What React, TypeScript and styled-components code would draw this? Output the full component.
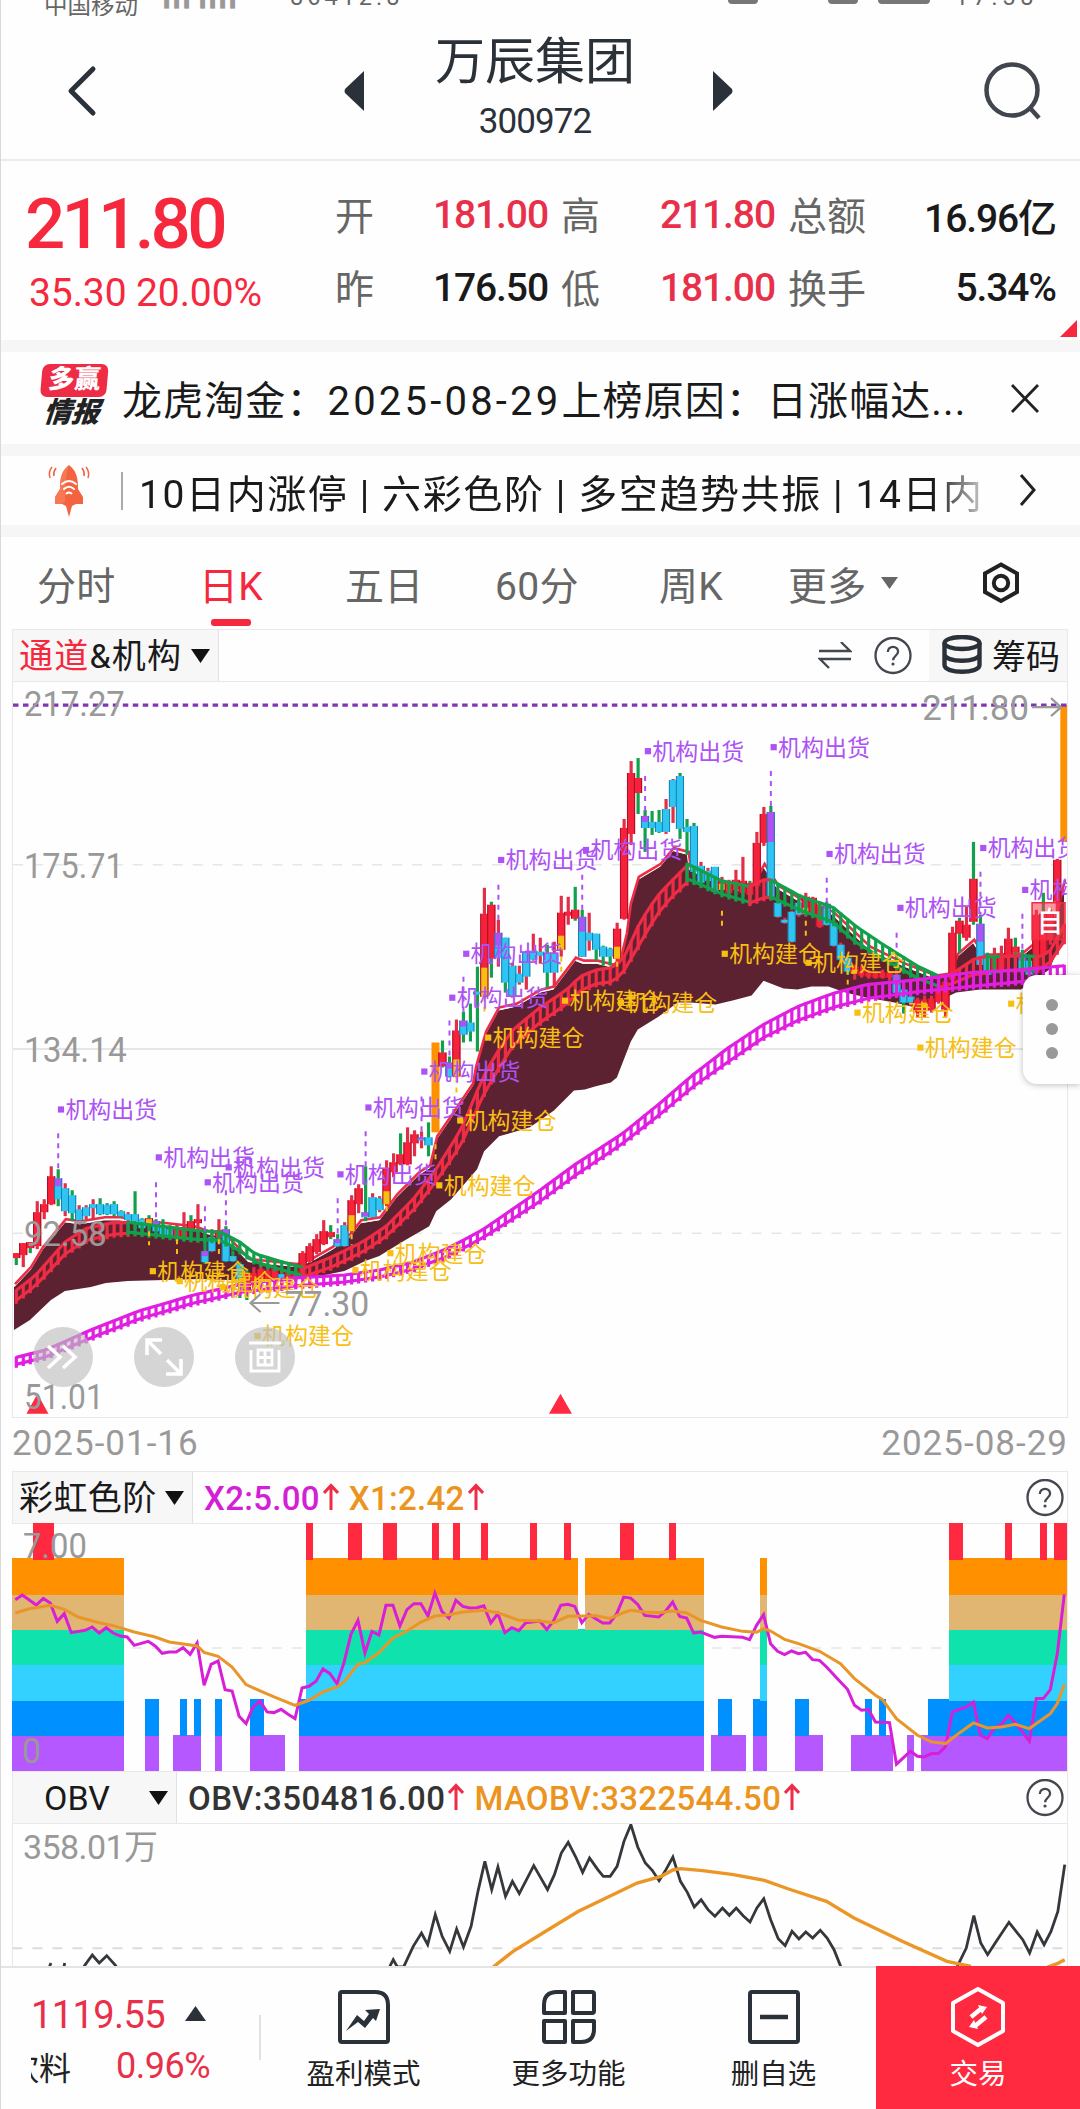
import React from "react";
import styled, { createGlobalStyle } from "styled-components";

const STEP = 7;
const RED = "#f5283e";
const GREEN = "#12a04c";
const ORANGE = "#ff9100";
const PURPLE = "#ad52f5";
const YELLOW = "#f7bf12";
const INK = "#2b3138";

const cx = (i: number) => 15.3 + STEP * i;

type Pt = [number, number];
const toPoints = (pts: Pt[]) => pts.map((p) => p.join(",")).join(" ");

// index, body kind, wick colour, high, body top, body split, body bottom, low
// kind: r = red, c = cyan, y = red over yellow, p = purple over cyan, o = orange
type Candle = [number, string, string, number, number, number, number, number];
const candles: Candle[] = [
    [0, "r", "g", 1254, 1254, 0, 1259, 1266],
    [1, "r", "r", 1244, 1244, 0, 1256, 1268],
    [2, "r", "g", 1243, 1243, 0, 1249, 1254],
    [3, "r", "r", 1202, 1213, 0, 1247, 1250],
    [4, "r", "r", 1200, 1205, 0, 1213, 1220],
    [5, "r", "r", 1167, 1177, 0, 1205, 1206],
    [6, "p", "g", 1170, 1179, 1187, 1200, 1207],
    [7, "c", "r", 1184, 1189, 0, 1212, 1217],
    [8, "c", "g", 1191, 1196, 0, 1214, 1222],
    [9, "c", "r", 1206, 1210, 0, 1221, 1223],
    [10, "c", "r", 1206, 1208, 0, 1217, 1220],
    [11, "c", "r", 1200, 1205, 0, 1209, 1221],
    [12, "c", "g", 1199, 1205, 0, 1215, 1216],
    [13, "c", "g", 1204, 1206, 0, 1215, 1216],
    [14, "c", "g", 1202, 1205, 0, 1215, 1217],
    [15, "c", "g", 1211, 1212, 0, 1217, 1218],
    [16, "c", "r", 1213, 1215, 0, 1221, 1224],
    [17, "c", "g", 1192, 1215, 0, 1222, 1230],
    [18, "c", "g", 1219, 1220, 0, 1229, 1234],
    [19, "y", "g", 1216, 1219, 1220, 1225, 1232],
    [20, "p", "g", 1220, 1222, 1227, 1232, 1235],
    [21, "c", "g", 1220, 1228, 0, 1237, 1239],
    [22, "c", "g", 1226, 1230, 0, 1238, 1239],
    [23, "r", "r", 1225, 1229, 0, 1239, 1242],
    [24, "r", "r", 1213, 1228, 0, 1238, 1242],
    [25, "r", "g", 1216, 1222, 0, 1230, 1241],
    [26, "r", "r", 1205, 1220, 0, 1224, 1240],
    [27, "p", "g", 1230, 1252, 1257, 1263, 1265],
    [28, "c", "r", 1230, 1238, 0, 1252, 1253],
    [29, "r", "r", 1220, 1231, 0, 1239, 1243],
    [30, "p", "g", 1227, 1230, 1236, 1262, 1263],
    [31, "c", "g", 1252, 1257, 0, 1262, 1263],
    [32, "c", "g", 1263, 1265, 0, 1288, 1299],
    [33, "r", "g", 1271, 1274, 0, 1293, 1301],
    [34, "r", "r", 1268, 1274, 0, 1286, 1290],
    [35, "r", "r", 1266, 1270, 0, 1282, 1288],
    [36, "r", "r", 1268, 1272, 0, 1282, 1286],
    [37, "r", "r", 1268, 1270, 0, 1281, 1284],
    [38, "c", "r", 1270, 1275, 0, 1281, 1286],
    [39, "r", "r", 1270, 1273, 0, 1282, 1285],
    [40, "r", "g", 1269, 1272, 0, 1278, 1282],
    [41, "r", "r", 1252, 1254, 0, 1277, 1280],
    [42, "r", "r", 1244, 1247, 0, 1262, 1264],
    [43, "r", "r", 1235, 1240, 0, 1253, 1255],
    [44, "r", "r", 1221, 1232, 0, 1245, 1246],
    [45, "r", "g", 1226, 1233, 0, 1238, 1240],
    [46, "p", "g", 1235, 1240, 1244, 1247, 1248],
    [47, "c", "r", 1223, 1226, 0, 1247, 1248],
    [48, "y", "r", 1196, 1201, 1216, 1232, 1235],
    [49, "r", "r", 1185, 1189, 0, 1205, 1214],
    [50, "p", "g", 1167, 1213, 1217, 1218, 1222],
    [51, "c", "r", 1194, 1198, 0, 1218, 1219],
    [52, "c", "r", 1197, 1199, 0, 1211, 1213],
    [53, "y", "r", 1161, 1169, 1192, 1205, 1207],
    [54, "r", "r", 1154, 1163, 0, 1173, 1178],
    [55, "r", "g", 1134, 1155, 0, 1165, 1166],
    [56, "r", "r", 1128, 1143, 0, 1165, 1166],
    [57, "r", "r", 1131, 1135, 0, 1144, 1157],
    [58, "p", "r", 1132, 1138, 1140, 1141, 1149],
    [59, "c", "g", 1123, 1138, 0, 1146, 1157],
    [60, "o", "r", 1043, 1043, 0, 1133, 1133],
    [61, "r", "g", 1041, 1053, 0, 1067, 1068],
    [62, "p", "g", 1057, 1063, 1069, 1077, 1078],
    [63, "y", "r", 1020, 1031, 1060, 1077, 1078],
    [64, "p", "g", 1012, 1021, 1027, 1035, 1043],
    [65, "c", "g", 1004, 1023, 0, 1032, 1042],
    [66, "c", "g", 967, 992, 0, 995, 1052],
    [67, "y", "r", 888, 914, 968, 997, 998],
    [68, "r", "g", 902, 905, 0, 959, 978],
    [69, "p", "r", 920, 933, 946, 958, 967],
    [70, "c", "g", 938, 938, 0, 983, 993],
    [71, "c", "r", 963, 966, 0, 997, 998],
    [72, "c", "r", 966, 974, 0, 983, 985],
    [73, "c", "r", 951, 953, 0, 977, 990],
    [74, "c", "r", 934, 951, 0, 960, 961],
    [75, "c", "r", 938, 952, 0, 956, 964],
    [76, "c", "g", 945, 953, 0, 973, 988],
    [77, "c", "r", 942, 953, 0, 973, 987],
    [78, "y", "r", 896, 913, 936, 950, 957],
    [79, "r", "r", 897, 912, 0, 916, 925],
    [80, "r", "g", 887, 910, 0, 919, 921],
    [81, "p", "g", 910, 917, 932, 957, 957],
    [82, "c", "r", 913, 933, 0, 941, 951],
    [83, "c", "g", 934, 934, 0, 950, 961],
    [84, "c", "g", 946, 947, 0, 957, 966],
    [85, "c", "g", 948, 949, 0, 957, 966],
    [86, "y", "r", 923, 929, 947, 959, 964],
    [87, "r", "r", 819, 828, 0, 919, 920],
    [88, "r", "r", 761, 773, 0, 834, 845],
    [89, "r", "g", 758, 778, 0, 793, 814],
    [90, "p", "g", 810, 816, 822, 828, 852],
    [91, "c", "g", 811, 822, 0, 828, 835],
    [92, "c", "g", 810, 822, 0, 832, 833],
    [93, "c", "r", 799, 809, 0, 832, 834],
    [94, "c", "r", 779, 780, 0, 807, 823],
    [95, "c", "g", 773, 776, 0, 829, 839],
    [96, "c", "g", 819, 827, 0, 832, 855],
    [97, "c", "g", 823, 826, 0, 872, 876],
    [98, "c", "r", 862, 866, 0, 883, 886],
    [99, "c", "r", 868, 871, 0, 881, 883],
    [100, "c", "g", 867, 867, 0, 892, 893],
    [101, "y", "r", 877, 881, 884, 890, 892],
    [102, "r", "r", 880, 884, 0, 893, 896],
    [103, "r", "r", 870, 880, 0, 890, 895],
    [104, "r", "r", 857, 881, 0, 893, 897],
    [105, "r", "g", 881, 883, 0, 895, 900],
    [106, "r", "r", 832, 843, 0, 886, 888],
    [107, "r", "r", 807, 814, 0, 843, 846],
    [108, "p", "g", 806, 812, 842, 897, 897],
    [109, "c", "r", 890, 903, 0, 917, 918],
    [110, "c", "r", 918, 920, 0, 923, 924],
    [111, "c", "r", 911, 912, 0, 942, 943],
    [112, "c", "r", 900, 903, 0, 915, 917],
    [113, "y", "r", 893, 897, 908, 914, 917],
    [114, "r", "r", 897, 898, 0, 915, 916],
    [115, "r", "r", 903, 907, 0, 927, 928],
    [116, "p", "g", 902, 904, 909, 925, 926],
    [117, "c", "r", 920, 923, 0, 946, 947],
    [118, "c", "r", 943, 945, 0, 960, 961],
    [119, "c", "g", 956, 958, 0, 972, 975],
    [120, "y", "r", 965, 967, 970, 974, 980],
    [121, "r", "r", 966, 971, 0, 976, 978],
    [122, "r", "r", 970, 973, 0, 977, 979],
    [123, "r", "r", 972, 973, 0, 978, 979],
    [124, "r", "r", 970, 973, 0, 978, 979],
    [125, "r", "r", 972, 973, 0, 978, 981],
    [126, "p", "r", 970, 975, 985, 993, 995],
    [127, "c", "g", 985, 990, 0, 1003, 1014],
    [128, "c", "r", 992, 997, 0, 1003, 1006],
    [129, "r", "r", 998, 1000, 0, 1013, 1018],
    [130, "y", "r", 996, 1000, 1003, 1008, 1018],
    [131, "r", "r", 996, 999, 0, 1011, 1013],
    [132, "r", "r", 985, 988, 0, 1002, 1004],
    [133, "r", "r", 978, 982, 0, 1010, 1018],
    [134, "r", "r", 927, 933, 0, 980, 981],
    [135, "r", "g", 918, 921, 0, 934, 953],
    [136, "r", "r", 907, 925, 0, 938, 941],
    [137, "r", "g", 842, 879, 0, 922, 925],
    [138, "p", "g", 915, 924, 942, 965, 968],
    [139, "c", "g", 953, 957, 0, 975, 981],
    [140, "r", "r", 948, 958, 0, 973, 978],
    [141, "r", "r", 946, 955, 0, 970, 974],
    [142, "r", "r", 928, 939, 0, 955, 961],
    [143, "r", "g", 938, 947, 0, 953, 972],
    [144, "p", "g", 950, 954, 961, 970, 978],
    [145, "c", "g", 955, 961, 0, 975, 979],
    [146, "r", "r", 910, 915, 0, 973, 977],
    [147, "r", "g", 893, 914, 0, 955, 960],
    [148, "r", "r", 908, 914, 0, 940, 945],
    [149, "r", "r", 859, 860, 0, 902, 925],
    [150, "o", "r", 705, 705, 0, 842, 842],
];

const cloudTop: Pt[] = [
    [13, 1288], [29, 1271], [41, 1251], [64, 1223], [79, 1225], [103, 1221], [119, 1221], [138, 1224],
    [193, 1230], [207, 1235], [224, 1238], [248, 1263], [296, 1268], [310, 1263], [331, 1251], [348, 1239],
    [360, 1224], [379, 1221], [396, 1198], [418, 1176], [429, 1169], [436, 1140], [451, 1118], [472, 1087],
    [475, 1070], [485, 1035], [498, 1011], [516, 1007], [540, 993], [553, 990], [575, 961], [583, 964],
    [597, 964], [613, 968], [620, 962], [626, 937], [630, 907], [638, 880], [660, 867], [673, 851], [688, 855],
    [690, 870], [722, 887], [750, 893], [764, 867], [778, 889], [802, 903], [833, 915], [870, 950],
    [905, 967], [936, 979], [950, 977], [958, 957], [974, 943], [984, 958], [1022, 957], [1039, 943],
    [1056, 920], [1065, 883],
];

const cloudBottom: Pt[] = [
    [13, 1331], [29, 1321], [50, 1301], [64, 1292], [90, 1288], [105, 1284], [127, 1282], [200, 1280],
    [260, 1282], [310, 1279], [344, 1272], [365, 1262], [379, 1257], [403, 1242], [429, 1227], [436, 1212],
    [451, 1200], [477, 1170], [484, 1152], [499, 1137], [530, 1128], [554, 1111], [574, 1091], [585, 1090],
    [595, 1087], [611, 1083], [617, 1078], [624, 1060], [631, 1042], [638, 1030], [659, 1017], [678, 1003],
    [691, 1003], [716, 1005], [733, 1001], [752, 996], [764, 981], [784, 989], [798, 990], [812, 987],
    [829, 987], [846, 993], [867, 998], [895, 1003], [912, 1007], [936, 1003], [957, 993], [981, 990],
    [1022, 990], [1050, 970], [1065, 937],
];

// x, upper edge, lower edge
type Band = [number, number, number];
const ribbons: { color: string; from: number; to: number; pts: Band[] }[] = [
    {
        color: "#ee2c45", from: 0, to: 16,
        pts: [[13, 1293, 1303], [34, 1277, 1287], [65, 1242, 1254], [86, 1229, 1241], [114, 1223, 1235], [131, 1224, 1234]],
    },
    {
        color: "#12a04c", from: 16, to: 41,
        pts: [[127, 1223, 1233], [193, 1231, 1240], [220, 1233, 1241], [238, 1242, 1251], [255, 1255, 1263], [300, 1268, 1276]],
    },
    {
        color: "#ee2c45", from: 41, to: 96,
        pts: [
            [299, 1271, 1279], [331, 1258, 1268], [362, 1243, 1253], [386, 1227, 1237], [413, 1200, 1211],
            [436, 1170, 1182], [461, 1130, 1145], [482, 1080, 1098], [495, 1056, 1075], [513, 1030, 1046],
            [540, 1008, 1023], [567, 990, 1004], [580, 977, 991], [597, 970, 984], [613, 968, 982], [623, 960, 973],
            [640, 923, 944], [657, 897, 915], [673, 880, 896], [690, 863, 880],
        ],
    },
    { color: "#12a04c", from: 96, to: 105, pts: [[688, 864, 879], [722, 881, 894], [752, 887, 903]] },
    { color: "#ee2c45", from: 105, to: 108, pts: [[750, 887, 903], [764, 880, 898], [774, 880, 897]] },
    {
        color: "#12a04c", from: 108, to: 132,
        pts: [[771, 880, 897], [802, 897, 911], [833, 907, 922], [857, 927, 943], [884, 945, 959], [919, 967, 979], [943, 978, 988]],
    },
    { color: "#ee2c45", from: 132, to: 139, pts: [[939, 978, 988], [953, 974, 984], [974, 960, 975], [984, 957, 974], [990, 957, 973]] },
    { color: "#12a04c", from: 139, to: 141, pts: [[984, 957, 972], [1004, 957, 972]] },
    { color: "#ee2c45", from: 141, to: 144, pts: [[1000, 957, 971], [1025, 956, 971]] },
    { color: "#12a04c", from: 144, to: 146, pts: [[1022, 956, 971], [1038, 957, 971]] },
    { color: "#ee2c45", from: 146, to: 150, pts: [[1036, 958, 971], [1050, 953, 964], [1066, 924, 940]] },
    {
        color: "#e01fe0", from: 0, to: 150,
        pts: [
            [13, 1359, 1366], [45, 1351, 1358], [90, 1331, 1339], [138, 1312, 1320], [193, 1296, 1304],
            [241, 1285, 1293], [293, 1279, 1287], [344, 1276, 1283], [379, 1271, 1278], [413, 1263, 1270],
            [448, 1249, 1257], [482, 1231, 1239], [517, 1207, 1217], [540, 1191, 1202], [574, 1166, 1177],
            [623, 1134, 1144], [660, 1104, 1115], [695, 1074, 1086], [729, 1048, 1062], [764, 1025, 1038],
            [798, 1007, 1021], [833, 994, 1008], [867, 985, 999], [919, 980, 992], [970, 973, 987],
            [1022, 970, 982], [1066, 966, 976],
        ],
    },
];

const bandAt = (pts: Band[], x: number): [number, number] => {
    const k = pts.findIndex((p) => p[0] >= x);
    if (k === -1) return [pts[pts.length - 1][1], pts[pts.length - 1][2]];
    if (k === 0) return [pts[0][1], pts[0][2]];
    const a = pts[k - 1];
    const b = pts[k];
    const t = (x - a[0]) / (b[0] - a[0]);
    return [a[1] + (b[1] - a[1]) * t, a[2] + (b[2] - a[2]) * t];
};

const sellMarks: Pt[] = [
    [645, 751], [771, 747], [827, 854], [898, 908], [981, 848], [1023, 890], [583, 850], [498, 860],
    [463, 954], [449, 998], [421, 1072], [57, 1110], [155, 1158], [225, 1168], [204, 1183], [337, 1175], [365, 1108],
];
const buyMarks: Pt[] = [
    [722, 954], [806, 963], [855, 1013], [918, 1048], [1009, 1004], [562, 1001], [618, 1003], [485, 1038],
    [457, 1121], [436, 1186], [387, 1254], [352, 1271], [149, 1272], [176, 1282], [219, 1288], [254, 1337],
];
// index, from, to
const sellStems = [
    [6, 1134, 1170], [20, 1183, 1225], [27, 1207, 1232], [30, 1191, 1227], [46, 1199, 1240], [50, 1132, 1167],
    [58, 1097, 1138], [62, 1021, 1057], [64, 977, 1012], [69, 885, 920], [81, 875, 910], [90, 776, 812],
    [108, 771, 806], [116, 878, 905], [126, 933, 950], [138, 872, 915], [144, 914, 950],
];
const buyStems = [
    [19, 1232, 1246], [23, 1240, 1256], [29, 1240, 1258], [48, 1235, 1246], [53, 1207, 1216], [60, 1145, 1162],
    [63, 1078, 1096], [67, 997, 1012], [78, 957, 976], [86, 962, 972], [101, 911, 927], [113, 921, 937], [119, 970, 986],
];

const KChart = () => (
    <KSvg viewBox="12 682 1056 736">
        <g stroke="#e6e6e6" strokeWidth="1.5">
            <path d="M12 865H1068M12 1234H1068" strokeDasharray="10 10" />
            <path d="M12 1049.5H1068" strokeWidth="1.5" stroke="#dedede" />
        </g>
        <polygon points={toPoints([...cloudTop, ...[...cloudBottom].reverse()])} fill="#5d2231" />
        <polyline points={toPoints(cloudTop)} fill="none" stroke="#fff" strokeWidth="2" transform="translate(0 -1)" />
        <polyline points={toPoints(cloudTop)} fill="none" stroke="#ee2c45" strokeWidth="2.6" transform="translate(1 -3)" />
        {candles.map(([i, kind, wick, high, top, split, bottom, low]) => {
            const x = cx(i);
            if (kind === "o") return <rect key={i} x={x - 4} y={top} width="8" height={bottom - top} fill={ORANGE} />;
            const upper = kind === "c" ? "#2fc4f2" : kind === "p" ? PURPLE : "#f6213b";
            const lower = kind === "y" ? YELLOW : "#2fc4f2";
            const edge = kind === "c" || kind === "p" ? "#1580ad" : "#a80f26";
            return (
                <g key={i}>
                    <path d={`M${x} ${high}V${low}`} stroke={wick === "g" ? GREEN : "#e03048"} strokeWidth="3.2" />
                    <rect x={x - 4} y={top} width="8" height={bottom - top} fill={upper} />
                    {split > 0 && <rect x={x - 4} y={split} width="8" height={bottom - split} fill={lower} />}
                    <path d={`M${x + 3.5} ${top}V${bottom}M${x - 3.7} ${top}V${bottom}`} stroke={edge} strokeWidth="1" />
                </g>
            );
        })}
        {ribbons.map((r, k) => {
            const xs: number[] = [];
            for (let i = r.from; i <= r.to; i++) xs.push(cx(i));
            const upper = xs.map((x): Pt => [x, bandAt(r.pts, x)[0]]);
            const lower = xs.map((x): Pt => [x, bandAt(r.pts, x)[1]]);
            return (
                <g key={k} stroke={r.color} strokeWidth="3.2" fill="none">
                    <polyline points={toPoints(upper)} />
                    <polyline points={toPoints(lower)} />
                    {xs.map((x, n) => (
                        <path key={n} d={`M${x} ${upper[n][1] - 1}V${lower[n][1] + 3.5}`} strokeWidth="3.2" />
                    ))}
                </g>
            );
        })}
        <g strokeWidth="2" strokeDasharray="5 5">
            {sellStems.map(([i, a, b]) => (
                <path key={i} d={`M${cx(i)} ${a}V${b}`} stroke={PURPLE} />
            ))}
            {buyStems.map(([i, a, b]) => (
                <path key={i} d={`M${cx(i)} ${a}V${b}`} stroke={YELLOW} />
            ))}
        </g>
        <path d="M1033 903H1066V940H1033Z" fill="rgba(245,60,80,.55)" stroke={RED} strokeWidth="1.5" />
        <text x="1038" y="932" fontSize="28" fontWeight="500" fill="#fff" textLength="26" lengthAdjust="spacingAndGlyphs">自</text>
        {sellMarks.map(([x, y], k) => (
            <Mark key={k} x={x} y={y} color={PURPLE} text="机构出货" />
        ))}
        {buyMarks.map(([x, y], k) => (
            <Mark key={k} x={x} y={y} color={YELLOW} text="机构建仓" />
        ))}
        <path d="M12 705H1068" stroke="#8034b8" strokeWidth="3.4" strokeDasharray="5.5 4.5" />
        <g fill="#999" fontSize="35">
            <text x="23" y="716" textLength="101" lengthAdjust="spacingAndGlyphs">217.27</text>
            <text x="23" y="878" textLength="100" lengthAdjust="spacingAndGlyphs">175.71</text>
            <text x="23" y="1063" textLength="103" lengthAdjust="spacingAndGlyphs">134.14</text>
            <text x="23" y="1247" textLength="83" lengthAdjust="spacingAndGlyphs">92.58</text>
            <text x="923" y="720" textLength="107" lengthAdjust="spacingAndGlyphs">211.80</text>
            <text x="284" y="1317" textLength="85" lengthAdjust="spacingAndGlyphs">77.30</text>
        </g>
        <path d="M1033 707H1061M1052 698L1062 707L1052 716" fill="none" stroke="#999" strokeWidth="2.2" />
        <path d="M279 1304H250M260 1295L250 1304L260 1313" fill="none" stroke="#999" strokeWidth="2.2" />
        <path d="M36.5 1395L47.5 1415H25.5ZM560.5 1395L572 1415H549Z" fill="#ff2a40" />
        <text x="23" y="1410" fontSize="35" fill="#999" textLength="80" lengthAdjust="spacingAndGlyphs">51.01</text>
    </KSvg>
);

const Mark = ({ x, y, color, text }: { x: number; y: number; color: string; text: string }) => (
    <g fill={color}>
        <rect x={x} y={y - 3} width="6.2" height="6.2" />
        <text x={x + 7.5} y={y + 8.5} fontSize="23" textLength="92">{text}</text>
    </g>
);

// number of rainbow levels per bar, as [first, last, level]
const levels = [
    [0, 15, 6], [19, 20, 2], [23, 23, 1], [24, 24, 2], [25, 25, 1], [26, 26, 2], [29, 29, 2], [34, 35, 2],
    [36, 38, 1], [41, 41, 2], [42, 80, 6], [81, 81, 4], [82, 98, 6], [100, 100, 1], [101, 102, 2], [103, 104, 1],
    [106, 106, 2], [107, 107, 6], [112, 113, 2], [114, 115, 1], [120, 121, 1], [122, 122, 2], [123, 123, 1],
    [124, 124, 2], [125, 125, 1], [128, 128, 1], [130, 130, 1], [131, 133, 2], [134, 150, 6],
];
const hotBars = [
    [3, 5], [42, 42], [48, 49], [53, 54], [60, 60], [63, 63], [67, 67], [74, 74], [79, 79], [87, 88], [94, 94],
    [134, 135], [142, 142], [147, 147], [149, 150],
];
const bandColors = ["#b558ff", "#0090ff", "#33d1ff", "#10e2ad", "#e0b672", "#ff9100"];

const x2Line: Pt[] = [
    [0, 418], [1, 404], [3, 434], [4, 414], [5, 428], [6, 483], [7, 460], [8, 517], [10, 510], [11, 500],
    [12, 518], [13, 502], [14, 518], [15, 527], [16, 530], [17, 555], [19, 543], [20, 557], [21, 579], [22, 575],
    [23, 575], [24, 562], [25, 582], [26, 548], [27, 675], [28, 612], [29, 602], [30, 688], [31, 692], [32, 768],
    [33, 790], [34, 740], [35, 722], [36, 755], [37, 757], [38, 747], [39, 762], [40, 775], [41, 683], [42, 678],
    [43, 663], [44, 626], [45, 640], [46, 670], [47, 607], [48, 522], [49, 480], [50, 578], [51, 513], [52, 524],
    [53, 435], [54, 435], [55, 497], [56, 448], [57, 430], [58, 430], [59, 467], [60, 398], [61, 453], [62, 473],
    [63, 420], [64, 438], [65, 443], [66, 442], [67, 436], [68, 488], [69, 460], [70, 517], [71, 502], [72, 511],
    [73, 487], [75, 482], [76, 508], [77, 480], [78, 435], [79, 432], [80, 438], [81, 487], [82, 462], [84, 488],
    [85, 488], [86, 460], [87, 410], [88, 413], [89, 432], [90, 465], [92, 470], [93, 452], [94, 425], [95, 468],
    [96, 473], [97, 518], [98, 515], [100, 531], [101, 528], [104, 531], [105, 538], [106, 495], [107, 463],
    [108, 550], [109, 573], [110, 583], [111, 572], [112, 580], [113, 576], [114, 598], [115, 600], [116, 620],
    [118, 665], [119, 687], [120, 735], [121, 750], [122, 748], [123, 785], [125, 787], [126, 912], [128, 873],
    [129, 888], [130, 890], [131, 880], [132, 880], [133, 860], [134, 755], [136, 740], [137, 725], [138, 825],
    [139, 835], [140, 803], [141, 792], [142, 765], [143, 787], [144, 815], [145, 843], [146, 715], [147, 715],
    [148, 688], [149, 580], [150, 402],
];
const x1Line: Pt[] = [
    [0, 458], [2, 445], [5, 435], [7, 447], [9, 470], [12, 487], [14, 496], [17, 515], [20, 530], [22, 545],
    [26, 557], [27, 576], [29, 588], [31, 620], [33, 673], [35, 692], [37, 710], [40, 735], [42, 720], [44, 695],
    [46, 680], [47, 665], [49, 612], [50, 607], [52, 577], [54, 533], [56, 512], [58, 485], [60, 467], [62, 463],
    [64, 455], [67, 450], [69, 457], [72, 480], [75, 482], [77, 487], [79, 468], [81, 467], [83, 466], [85, 474],
    [87, 457], [88, 450], [90, 455], [92, 457], [94, 452], [96, 458], [98, 480], [101, 500], [104, 513],
    [106, 516], [107, 505], [108, 512], [110, 537], [112, 550], [115, 573], [118, 610], [120, 655], [123, 705],
    [124, 718], [126, 775], [129, 825], [131, 845], [133, 850], [135, 818], [137, 788], [139, 803], [141, 800],
    [143, 792], [145, 805], [148, 760], [149, 730], [150, 672],
];
const scaleRainbow = (pts: Pt[]) => toPoints(pts.map(([i, v]): Pt => [cx(i) - 12, (v - 188) / 3]));

const RainbowChart = () => (
    <RainbowSvg viewBox="0 0 1056 249">
        <path d="M0 125H1056" stroke="#e6e6e6" strokeWidth="1.5" strokeDasharray="10 10" />
        <g shapeRendering="crispEdges">
            {levels.map(([a, b, n]) =>
                bandColors.slice(0, n).map((c, k) => {
                    const y = k === n - 1 ? 213.5 - 35.5 * k - 1.5 : 213.5 - 35.5 * k;
                    return (
                        <rect key={`${a}-${k}`} x={a * STEP} y={y} width={(b - a + 1) * STEP} height={249 - 35.5 * k - y} fill={c} />
                    );
                })
            )}
            {hotBars.map(([a, b]) => (
                <rect key={a} x={a * STEP} y={0} width={(b - a + 1) * STEP} height={37} fill="#ff2a40" />
            ))}
        </g>
        <polyline points={scaleRainbow(x2Line)} fill="none" stroke="#d81fd8" strokeWidth="3" />
        <polyline points={scaleRainbow(x1Line)} fill="none" stroke="#e8962a" strokeWidth="3" />
        <g fill="#999" fontSize="35">
            <text x="11" y="35" textLength="64" lengthAdjust="spacingAndGlyphs">7.00</text>
            <text x="10" y="240" textLength="19" lengthAdjust="spacingAndGlyphs">0</text>
        </g>
    </RainbowSvg>
);

const obvLine =
    "566,590 571,570 577,592 586,592 600,530 612,490 621,525 632,435 642,500 653,545 663,478 673,532 684,470 694,365 704,275 714,360 723,292 734,380 744,335 754,372 775,288 795,360 805,315 815,250 825,218 836,262 846,308 856,265 868,300 876,320 886,320 896,290 906,215 916,165 926,232 937,280 947,302 957,333 967,300 977,262 988,335 998,368 1008,412 1018,390 1028,420 1038,440 1049,415 1059,437 1069,415 1079,438 1089,457 1099,415 1109,387 1119,450 1130,507 1140,528 1150,485 1160,508 1170,487 1180,505 1191,482 1201,505 1211,540 1221,592";
const obvTail =
    "1390,590 1403,535 1414,438 1424,520 1434,555 1445,520 1465,458 1485,510 1495,550 1506,487 1516,525 1526,485 1536,425 1546,285";
const maObvLine =
    "716,592 745,545 800,475 840,425 880,385 925,340 960,320 977,301 988,297 1020,303 1065,315 1110,332 1145,358 1200,395 1240,445 1310,515 1375,575 1410,590";

const ObvChart = () => (
    <ObvWrap>
        <ObvSvg viewBox="17.42 163 1533.3 426" preserveAspectRatio="none">
            <path d="M18 536H1550" stroke="#dcdcdc" strokeWidth="2" strokeDasharray="10 10" />
            <g stroke="#34383c" strokeWidth="2.8">
                <polyline points={obvLine} />
                <polyline points={obvTail} />
                <polyline points="122,590 134,556 144,580 155,558 169,590" />
                <path d="M72 590L74 580M93 590L94 580" />
            </g>
            <g stroke="#eb9626" strokeWidth="3.4">
                <polyline points={maObvLine} />
                <polyline points="1521,592 1535,582 1546,570" />
            </g>
        </ObvSvg>
        <ObvMax>358.01万</ObvMax>
    </ObvWrap>
);

const Help = () => (
    <svg width="38" height="38" viewBox="0 0 38 38" fill="none" stroke="#43474f" strokeWidth="2.3">
        <circle cx="19" cy="18.5" r="17.5" />
        <path d="M13.8 15c0-7 10.6-6.6 10.3-.2-.2 3.8-5 4.3-5 8.5" />
        <circle cx="19" cy="27" r="1.6" fill="#43474f" stroke="none" />
    </svg>
);

const Caret = ({ w, h, color = "#111" }: { w: number; h: number; color?: string }) => (
    <svg width={w} height={h} viewBox="0 0 10 10" preserveAspectRatio="none">
        <path d="M0 0H10L5 10Z" fill={color} />
    </svg>
);

const UpArrow = () => (
    <ArrowSvg width="16" height="28" viewBox="0 0 16 28" fill="none" stroke="#ee2c45" strokeWidth="3">
        <path d="M8 27V3M1 10L8 2.5L15 10" />
    </ArrowSvg>
);

const Rocket = () => (
    <svg width="44" height="54" viewBox="0 0 44 54">
        <path d="M22 1C13 8 13 17 13 25L8 33V40H15L19 42L22 53L25 42L29 40H36V33L31 25C31 17 31 8 22 1Z" fill="#f4633f" />
        <path d="M22 1C19 8 18 24 18 38L15 40H8V33L13 25C13 17 13 8 22 1Z" fill="#f88b67" opacity=".55" />
        <g fill="none" stroke="#fff" strokeWidth="2" strokeLinecap="round">
            <path d="M15 20Q22 14 29 20M17 25Q22 20.5 27 25M19.5 29.5Q22 27.5 24.5 29.5" />
        </g>
        <g fill="none" stroke="#f4633f" strokeWidth="1.5">
            <path d="M5 3Q1 8 3 14M9 4Q6 8 7 12M39 3Q43 8 41 14M35 4Q38 8 37 12" />
        </g>
    </svg>
);

const quotes = [
    ["开", "181.00", true, "高", "211.80", true, "总额", "16.96亿"],
    ["昨", "176.50", false, "低", "181.00", true, "换手", "5.34%"],
] as const;

const tabs = [
    { name: "分时" },
    { name: "日K", active: true },
    { name: "五日" },
    { name: "60分" },
    { name: "周K" },
    { name: "更多", more: true },
];

const App = () => {
    return (
        <Page>
            <GlobalStyle />
            <StatusBar>
                <Carrier>中国移动</Carrier>
                <StatusBits>▮▮▮ ▮▮▮▮</StatusBits>
                <StatusSpeed>86412.8</StatusSpeed>
                <StatusIcons>
                    <i />
                    <i />
                    <b />
                </StatusIcons>
                <Clock>17:58</Clock>
            </StatusBar>
            <Header>
                <svg width="32" height="52" viewBox="0 0 32 52" fill="none" stroke={INK} strokeWidth="5" strokeLinecap="round" strokeLinejoin="round">
                    <path d="M27 4L5 26L27 48" />
                </svg>
                <TitleGroup>
                    <svg width="21" height="40" viewBox="0 0 21 40">
                        <path d="M20 0V40L1 22Q0 20 1 18Z" fill={INK} />
                    </svg>
                    <Title>
                        <h1>万辰集团</h1>
                        <p>300972</p>
                    </Title>
                    <svg width="21" height="40" viewBox="0 0 21 40">
                        <path d="M1 0V40L20 22Q21 20 20 18Z" fill={INK} />
                    </svg>
                </TitleGroup>
                <svg width="60" height="60" viewBox="0 0 60 60" fill="none" stroke="#41454d" strokeWidth="4.5">
                    <circle cx="28" cy="29" r="25.5" />
                    <path d="M46 47L55 57" />
                </svg>
            </Header>
            <Quote>
                <Price>
                    <strong>211.80</strong>
                    <span>35.30 20.00%</span>
                </Price>
                {quotes.map((q) => (
                    <React.Fragment key={q[0]}>
                        <Label>{q[0]}</Label>
                        <Value $up={q[2]}>{q[1]}</Value>
                        <Label>{q[3]}</Label>
                        <Value $up={q[5]}>{q[4]}</Value>
                        <Label>{q[6]}</Label>
                        <Value>{q[7]}</Value>
                    </React.Fragment>
                ))}
                <Corner />
            </Quote>
            <Gap />
            <NewsRow>
                <Badge>
                    <span>多赢</span>
                    <em>情报</em>
                </Badge>
                <NewsText>
                    龙虎淘金：<Num>2025-08-29</Num>上榜原因：日涨幅达...
                </NewsText>
                <svg width="30" height="30" viewBox="0 0 30 30" stroke="#222" strokeWidth="2.8">
                    <path d="M1 2L27 29M27 2L1 29" />
                </svg>
            </NewsRow>
            <Gap />
            <SignalRow>
                <Rocket />
                <Ticker>
                    <Bar />
                    10日内涨停 | 六彩色阶 | 多空趋势共振 | 14日内
                </Ticker>
                <svg width="20" height="34" viewBox="0 0 20 34" fill="none" stroke="#222" strokeWidth="3">
                    <path d="M2 1L15 16L2 31" />
                </svg>
            </SignalRow>
            <Gap />
            <Tabs>
                {tabs.map((t) => (
                    <Tab key={t.name} $active={t.active}>
                        {t.name}
                        {t.more && <Caret w={17} h={12} color="#666" />}
                    </Tab>
                ))}
                <svg width="38" height="42" viewBox="0 0 38 42" fill="none" stroke="#222" strokeWidth="4">
                    <path d="M19 2.5L35 11.5V30L19 39L3 30V11.5Z" />
                    <circle cx="19" cy="21" r="7.2" />
                </svg>
            </Tabs>
            <PanelHead>
                <Picker $width={206} $spacing={1.2}>
                    <span>
                        <mark>通道</mark>&amp;机构
                    </span>
                    <Caret w={19} h={14} />
                </Picker>
                <HeadTools>
                    <svg width="34" height="28" viewBox="0 0 34 28" fill="none" stroke="#43474f" strokeWidth="2.3">
                        <path d="M1 9H32L23 0M33 17H2L11 26" />
                    </svg>
                    <Help />
                    <Chips>
                        <svg width="40" height="39" viewBox="0 0 40 39" fill="none" stroke={INK} strokeWidth="4.4">
                            <ellipse cx="20" cy="8" rx="17.5" ry="6" />
                            <path d="M2.5 8V30C2.5 39 37.5 39 37.500 30V8M2.5 19C2.5 28 37.5 28 37.5 19" />
                        </svg>
                        筹码
                    </Chips>
                </HeadTools>
            </PanelHead>
            <Plot>
                <KChart />
                <PlotTools>
                    <Round>
                        <svg width="36" height="30" viewBox="0 0 36 30">
                            <path d="M3 4L15 15L3 26M18 4L30 15L18 26" />
                        </svg>
                    </Round>
                    <Round>
                        <svg width="38" height="38" viewBox="0 0 38 38">
                            <path d="M2 17V2H17M2 2L16 16M36 21V36H21M36 36L22 22" />
                        </svg>
                    </Round>
                    <Round>
                        <svg width="34" height="34" viewBox="0 0 34 34">
                            <path d="M1 3H33M3 10V31H31V10M10 10H24V25H10ZM17 10V25M10 17.5H24" strokeWidth="2.8" />
                        </svg>
                    </Round>
                </PlotTools>
                <SideHandle>
                    <i />
                    <i />
                    <i />
                </SideHandle>
            </Plot>
            <Dates>
                <span>2025-01-16</span>
                <span>2025-08-29</span>
            </Dates>
            <PanelHead>
                <Picker $width={180} $spacing={0.4}>
                    彩虹色阶
                    <Caret w={19} h={14} />
                </Picker>
                <Readout>
                    <Figure $color="#d420d4" $spacing={0.3}>X2:5.00</Figure>
                    <UpArrow />
                    <Figure $color="#ec9420" $spacing={0.3}>X1:2.42</Figure>
                    <UpArrow />
                </Readout>
                <HelpSlot>
                    <Help />
                </HelpSlot>
            </PanelHead>
            <RainbowChart />
            <PanelHead>
                <Picker $width={164} $indent={31}>
                    OBV
                    <Caret w={19} h={14} />
                </Picker>
                <Readout>
                    <Figure $color="#333" $spacing={0.45}>OBV:3504816.00</Figure>
                    <UpArrow />
                    <Figure $color="#ec9420" $spacing={0.3}>MAOBV:3322544.50</Figure>
                    <UpArrow />
                </Readout>
                <HelpSlot>
                    <Help />
                </HelpSlot>
            </PanelHead>
            <ObvChart />
            <Nav>
                <IndexBox>
                    <div>
                        1119.55
                        <svg width="21" height="15" viewBox="0 0 21 15">
                            <path d="M10.5 0L21 15H0Z" fill={INK} />
                        </svg>
                    </div>
                    <div>
                        <Marquee>
                            <span>饮料</span>
                        </Marquee>
                        0.96%
                    </div>
                </IndexBox>
                <NavItem>
                    <svg width="52" height="54" viewBox="0 0 52 54" fill="none" stroke={INK} strokeWidth="4">
                        <path d="M4 2H37Q50 2 50 15V50Q50 52 48 52H4Q2 52 2 50V4Q2 2 4 2Z" />
                        <path d="M8 41L19 25L26 31L31 24L27 20L42 19L38 31L35 28L27 38L20 32Z" fill={INK} stroke="none" />
                    </svg>
                    盈利模式
                </NavItem>
                <NavItem>
                    <svg width="54" height="54" viewBox="0 0 54 54" fill="none" stroke={INK} strokeWidth="4" strokeLinejoin="round">
                        <path d="M23 2V23H2V15Q2 2 15 2ZM31 2H50Q52 2 52 4V21Q52 23 50 23H31ZM2 31H23V52H4Q2 52 2 50ZM31 31H52V39Q52 52 39 52H31Z" />
                    </svg>
                    更多功能
                </NavItem>
                <NavItem>
                    <svg width="52" height="54" viewBox="0 0 52 54" fill="none" stroke={INK} strokeWidth="4">
                        <rect x="2" y="2" width="48" height="50" rx="2" />
                        <path d="M12 27H40" strokeWidth="4.5" />
                    </svg>
                    删自选
                </NavItem>
                <Trade>
                    <svg width="56" height="60" viewBox="0 0 56 60" fill="none" stroke="#fff" strokeWidth="4" strokeLinejoin="round">
                        <path d="M28 2L53 16V44L28 58L3 44V16Z" />
                        <path d="M21 30L32 21M36 30L25 39" strokeWidth="4.500" />
                        <path d="M28 18L37 20L32 27ZM28 42L19 40L24 33Z" fill="#fff" stroke="none" />
                    </svg>
                    交易
                </Trade>
            </Nav>
        </Page>
    );
};

export default App;

const GlobalStyle = createGlobalStyle`
    body {
        margin: 0;
        background: #fff;
    }
    * {
        box-sizing: border-box;
    }
    svg {
        display: block;
        flex: none;
    }
`;

const Page = styled.div`
    display: flex;
    flex-direction: column;
    width: 1080px;
    height: 2109px;
    overflow: hidden;
    background: #fefefe;
    border-left: 1px solid #d8d8d8;
    font-family: Roboto, "Noto Sans CJK SC", sans-serif;
    color: #1a1a1a;
    white-space: nowrap;
`;

const StatusBar = styled.div`
    display: flex;
    align-items: flex-end;
    height: 16px;
    padding-left: 43px;
    overflow: hidden;
    color: #666;
    font-size: 23.5px;
    line-height: 20px;
`;

const Carrier = styled.span`
    width: 119px;
`;

const StatusBits = styled.span`
    width: 127px;
    height: 16px;
    overflow: hidden;
    font-size: 13px;
    line-height: 5px;
    letter-spacing: 3px;
    color: #999;
`;

const StatusSpeed = styled.span`
    width: 438px;
    height: 29px;
    letter-spacing: 4px;
`;

const StatusIcons = styled.span`
    display: flex;
    gap: 20px;
    width: 227px;
    height: 16px;
    i,
    b {
        height: 4px;
        width: 30px;
        border-radius: 0 0 8px 8px;
        background: #777;
    }
    i + i {
        margin-left: 50px;
    }
    b {
        width: 52px;
    }
`;

const Clock = styled.span`
    height: 29px;
    letter-spacing: 5px;
`;

const Header = styled.header`
    display: flex;
    align-items: center;
    justify-content: space-between;
    height: 145px;
    padding: 7px 36px 0 65px;
    border-bottom: 2px solid #ebebeb;
`;

const TitleGroup = styled.div`
    display: flex;
    align-items: center;
    justify-content: space-between;
    width: 389px;
    margin-right: 6px;
`;

const Title = styled.div`
    margin-right: 6px;
    text-align: center;
    color: ${INK};
    h1 {
        margin: 2px 0 0;
        font-size: 50px;
        line-height: 62px;
        font-weight: 400;
    }
    p {
        margin: 8px 0 10px;
        font-size: 35px;
        line-height: 42px;
        letter-spacing: -0.9px;
    }
`;

const Quote = styled.section`
    position: relative;
    display: grid;
    grid-template-columns: 308px 63px 150px 52px 175px 91px 190px;
    grid-template-rows: 73px 73px;
    align-items: center;
    height: 179px;
    padding: 17px 0 0 26px;
`;

const Price = styled.div`
    grid-row: 1 / 3;
    display: flex;
    flex-direction: column;
    color: ${RED};
    strong {
        margin-left: -2px;
        font-size: 71px;
        line-height: 78px;
        font-weight: 500;
        letter-spacing: -3.8px;
    }
    span {
        margin: 5px 0 0 2px;
        font-size: 39px;
        line-height: 50px;
        letter-spacing: -0.1px;
    }
`;

const Label = styled.span`
    justify-self: end;
    padding-bottom: 3px;
    font-size: 39px;
    color: #666;
    &:nth-child(6n + 2) {
        justify-self: start;
    }
`;

const Value = styled.span<{ $up?: boolean }>`
    justify-self: end;
    font-size: 39px;
    font-weight: 500;
    letter-spacing: -1.1px;
    color: ${({ $up }) => ($up ? "#e8304a" : "#1a1a1a")};
`;

const Corner = styled.i`
    position: absolute;
    right: 3px;
    bottom: 3px;
    border-left: 17px solid transparent;
    border-bottom: 17px solid ${RED};
`;

const Gap = styled.div`
    flex: none;
    height: 12px;
    background: #f6f6f6;
`;

const NewsRow = styled.div`
    display: flex;
    align-items: center;
    height: 92px;
    padding: 0 39px 0 39px;
`;

const Badge = styled.div`
    width: 66px;
    margin: 0 16px 4px 0;
    text-align: center;
    font-weight: 900;
    line-height: 30px;
    transform: skewX(-5deg);
    span {
        display: block;
        height: 33px;
        border-radius: 7px;
        background: #ee2c45;
        color: #fff;
        font-size: 26px;
    }
    em {
        display: block;
        font-size: 28px;
        line-height: 31px;
        color: #222;
    }
`;

const NewsText = styled.div`
    flex: 1;
    font-size: 40px;
    letter-spacing: 1.1px;
`;

const Num = styled.span`
    letter-spacing: 3.2px;
`;

const SignalRow = styled.div`
    display: flex;
    align-items: center;
    height: 69px;
    padding: 0 41px 0 46px;
`;

const Ticker = styled.div`
    display: flex;
    align-items: center;
    width: 864px;
    margin: 0 auto 0 30px;
    overflow: hidden;
    white-space: pre;
    font-size: 39px;
    letter-spacing: 1.6px;
    mask-image: linear-gradient(90deg, #000 94%, rgba(0, 0, 0, 0.2) 100%);
`;

const Bar = styled.i`
    flex: none;
    width: 2px;
    height: 38px;
    margin-right: 16px;
    background: #aaa;
`;

const Tabs = styled.nav`
    display: grid;
    grid-template-columns: 162px 146px 150px 164px 129px 194px 38px;
    align-items: center;
    height: 92px;
    padding-left: 36px;
`;

const Tab = styled.div<{ $active?: boolean }>`
    position: relative;
    display: flex;
    align-items: center;
    gap: 14px;
    width: max-content;
    height: 92px;
    padding-bottom: 1px;
    font-size: 39px;
    letter-spacing: 0.3px;
    color: ${({ $active }) => ($active ? RED : "#666")};
    &::after {
        content: "";
        display: ${({ $active }) => ($active ? "block" : "none")};
        position: absolute;
        left: 12px;
        bottom: 3px;
        width: 40px;
        height: 7px;
        border-radius: 3px;
        background: ${RED};
    }
`;

const PanelHead = styled.div`
    display: flex;
    flex: none;
    align-items: stretch;
    height: 53px;
    width: 1056px;
    margin-left: 11px;
    border: 1px solid #e8e8e8;
`;

const Picker = styled.div<{ $width: number; $indent?: number; $spacing?: number }>`
    display: flex;
    align-items: center;
    justify-content: space-between;
    width: ${({ $width }) => $width}px;
    padding: 0 8px 0 ${({ $indent }) => $indent || 6}px;
    background: #f7f7f7;
    border-right: 1px solid #e2e2e2;
    font-size: 34px;
    line-height: 50px;
    letter-spacing: ${({ $spacing }) => $spacing || 0}px;
    mark {
        background: none;
        color: ${RED};
    }
`;

const HeadTools = styled.div`
    display: flex;
    align-items: center;
    gap: 22px;
    margin-left: auto;
`;

const Chips = styled.div`
    display: flex;
    align-items: center;
    gap: 10px;
    width: 138px;
    height: 51px;
    margin-left: -5px;
    padding: 0 0 2px 13px;
    background: #f7f7f7;
    font-size: 34px;
`;

const Plot = styled.div`
    position: relative;
    flex: none;
    height: 736px;
    width: 1079px;
`;

const KSvg = styled.svg`
    width: 1056px;
    height: 736px;
    margin-left: 11px;
    border: 1px solid #e8e8e8;
    border-top: none;
    font-family: Roboto, "Noto Sans CJK SC", sans-serif;
`;

const PlotTools = styled.div`
    position: absolute;
    left: 32px;
    bottom: 31px;
    display: flex;
    gap: 41px;
`;

const Round = styled.div`
    display: flex;
    align-items: center;
    justify-content: center;
    width: 60px;
    height: 60px;
    border-radius: 50%;
    background: rgba(190, 190, 190, 0.65);
    svg {
        fill: none;
        stroke: #fff;
        stroke-width: 3.6;
    }
`;

const SideHandle = styled.div`
    position: absolute;
    right: 0;
    top: 293px;
    display: flex;
    flex-direction: column;
    align-items: center;
    gap: 12px;
    width: 57px;
    height: 109px;
    padding-top: 24px;
    border-radius: 14px 0 0 14px;
    background: #fefefe;
    box-shadow: 0 1px 6px rgba(0, 0, 0, 0.25);
    i {
        width: 12px;
        height: 12px;
        border-radius: 50%;
        background: #999;
    }
`;

const Dates = styled.div`
    display: flex;
    flex: none;
    align-items: center;
    justify-content: space-between;
    height: 53px;
    padding: 0 12px 3px 11px;
    font-size: 35px;
    letter-spacing: 1px;
    color: #999;
`;

const Readout = styled.div`
    display: flex;
    align-items: center;
    padding: 2px 0 0 11px;
`;

const Figure = styled.span<{ $color: string; $spacing: number }>`
    font-size: 33px;
    font-weight: 500;
    letter-spacing: ${({ $spacing }) => $spacing}px;
    color: ${({ $color }) => $color};
`;

const ArrowSvg = styled.svg`
    margin: 0 10px 4px 3px;
`;

const HelpSlot = styled.div`
    display: flex;
    align-items: center;
    margin-left: auto;
    padding-right: 3px;
`;

const RainbowSvg = styled.svg`
    width: 1056px;
    height: 249px;
    margin: -1px 0 -1px 11px;
    border-right: 1px solid #e8e8e8;
    font-family: Roboto, "Noto Sans CJK SC", sans-serif;
`;

const ObvWrap = styled.div`
    position: relative;
    flex: none;
    height: 142px;
    width: 1056px;
    margin-left: 11px;
    border: solid #e8e8e8;
    border-width: 0 1px;
`;

const ObvSvg = styled.svg`
    width: 1056px;
    height: 142px;
    margin-left: -1px;
    fill: none;
    path,
    polyline {
        vector-effect: non-scaling-stroke;
    }
`;

const ObvMax = styled.span`
    position: absolute;
    left: 10px;
    top: 2px;
    font-size: 34px;
    line-height: 42px;
    letter-spacing: -0.6px;
    color: #999;
`;

const Nav = styled.footer`
    display: flex;
    flex: none;
    height: 143px;
    border-top: 2px solid #e4e4e4;
    background: #fefefe;
`;

const IndexBox = styled.div`
    position: relative;
    width: 260px;
    padding: 21px 0 0 30px;
    color: #e8304a;
    div {
        display: flex;
        align-items: center;
        height: 52px;
        font-size: 38px;
        letter-spacing: -0.6px;
    }
    div > svg {
        margin: 0 0 3px 20px;
    }
    > div:last-child {
        height: 50px;
        font-size: 36px;
        font-weight: 400;
        letter-spacing: -0.5px;
    }
    &::after {
        content: "";
        position: absolute;
        right: 0;
        top: 47px;
        width: 2px;
        height: 45px;
        background: #e2e2e2;
    }
`;

const Marquee = styled.section`
    display: flex;
    justify-content: flex-end;
    width: 40px;
    margin-right: 45px;
    overflow: hidden;
    color: #222;
    font-size: 32px;
    letter-spacing: 0;
`;

const NavItem = styled.div`
    display: flex;
    flex-direction: column;
    align-items: center;
    gap: 9px;
    width: 205px;
    padding-top: 22px;
    font-size: 28.5px;
    line-height: 44px;
    color: #222;
`;

const Trade = styled(NavItem)`
    flex: 1;
    gap: 6px;
    margin-top: -2px;
    padding-top: 21px;
    background: #ff2a40;
    color: #fff;
`;
